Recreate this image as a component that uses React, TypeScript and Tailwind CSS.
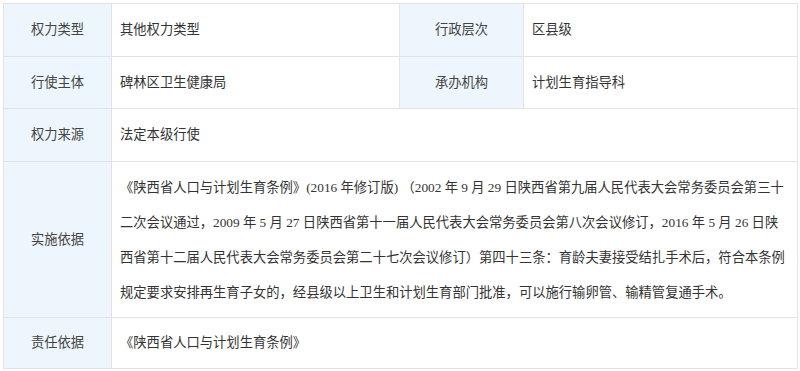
const label =
    'flex items-center justify-center border-r border-b border-[#e3e3e3] bg-[#eef6fd] text-[#444]';
const value = 'flex items-center border-r border-b border-[#e3e3e3] bg-white pl-2 text-[#333]';

const basisLines = [
    '《陕西省人口与计划生育条例》(2016 年修订版) （2002 年 9 月 29 日陕西省第九届人民代表大会常务委员会第三十',
    '二次会议通过，2009 年 5 月 27 日陕西省第十一届人民代表大会常务委员会第八次会议修订，2016 年 5 月 26 日陕',
    '西省第十二届人民代表大会常务委员会第二十七次会议修订）第四十三条：育龄夫妻接受结扎手术后，符合本条例',
    '规定要求安排再生育子女的，经县级以上卫生和计划生育部门批准，可以施行输卵管、输精管复通手术。',
];

export default function App() {
    return (
        <div className="min-h-[371px] w-[800px] bg-white pt-[3px] pl-[3px]">
            <div
                className="grid w-[795px] grid-cols-[108px_288px_124px_274px] grid-rows-[53px_52px_53px_156px_51px] border-t border-l border-[#e3e3e3] text-[13.3px]"
                style={{ fontFamily: '"Liberation Serif", "Noto Sans CJK SC", serif' }}
            >
                {/* row 1 */}
                <div className={label}>权力类型</div>
                <div className={value}>其他权力类型</div>
                <div className={label}>行政层次</div>
                <div className={value}>区县级</div>

                {/* row 2 */}
                <div className={label}>行使主体</div>
                <div className={value}>碑林区卫生健康局</div>
                <div className={label}>承办机构</div>
                <div className={value}>计划生育指导科</div>

                {/* row 3 */}
                <div className={label}>权力来源</div>
                <div className={`${value} col-span-3`}>法定本级行使</div>

                {/* row 4 — long legal basis, line breaks follow the source */}
                <div className={label}>实施依据</div>
                <div className={`${value} col-span-3`}>
                    <div className="leading-[35px] whitespace-nowrap">
                        {basisLines.map((line) => (
                            <div key={line}>{line}</div>
                        ))}
                    </div>
                </div>

                {/* row 5 */}
                <div className={label}>责任依据</div>
                <div className={`${value} col-span-3`}>《陕西省人口与计划生育条例》</div>
            </div>
        </div>
    );
}
